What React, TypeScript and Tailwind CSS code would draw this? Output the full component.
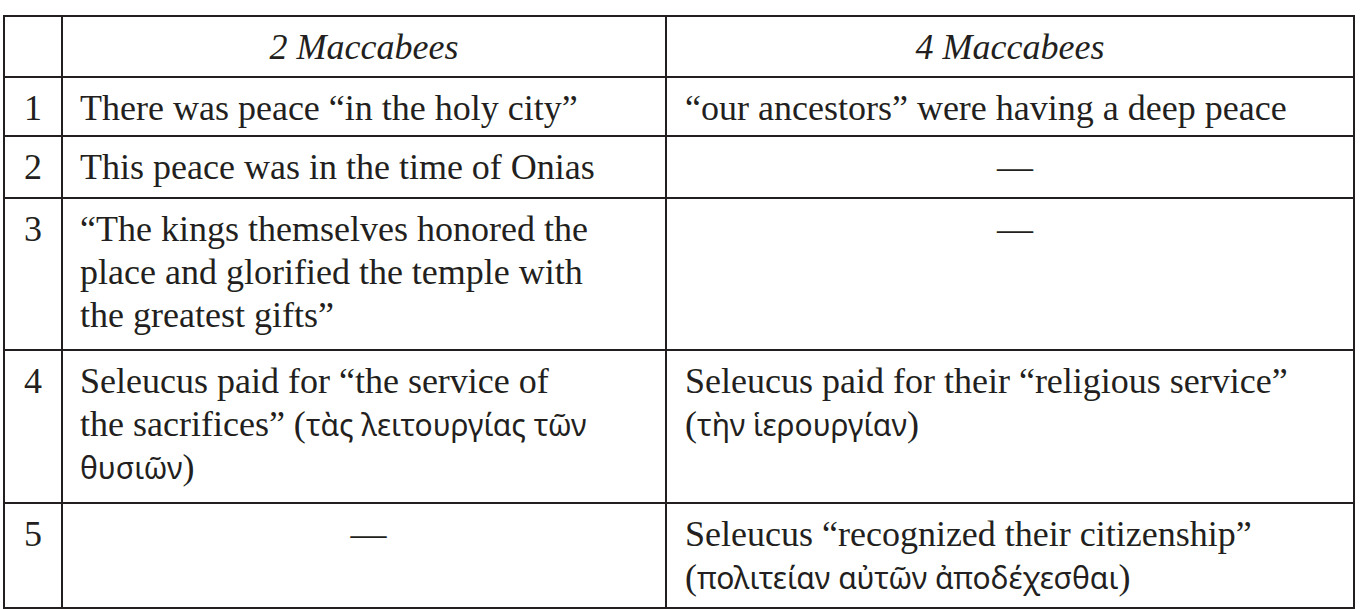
import type { ReactNode } from "react";

const INK = "text-[#231f20]";

function Greek({ children }: { children: ReactNode }) {
  return <span className="font-['Noto_Sans',sans-serif] text-[30px]">{children}</span>;
}

function Dash() {
  return <div className="text-center">—</div>;
}

type Row = { n: number; h: string; left: ReactNode; right: ReactNode };

const ROWS: Row[] = [
  {
    n: 1,
    h: "h-[59px]",
    left: <>There was peace “in the holy city”</>,
    right: <>“our ancestors” were having a deep peace</>,
  },
  {
    n: 2,
    h: "h-[62px]",
    left: <>This peace was in the time of Onias</>,
    right: <Dash />,
  },
  {
    n: 3,
    h: "h-[152px]",
    left: (
      <>
        “The kings themselves honored the
        <br />
        place and glorified the temple with
        <br />
        the greatest gifts”
      </>
    ),
    right: <Dash />,
  },
  {
    n: 4,
    h: "h-[153px]",
    left: (
      <>
        Seleucus paid for “the service of
        <br />
        the sacrifices” (<Greek>τὰς λειτουργίας τῶν</Greek>
        <br />
        <Greek>θυσιῶν</Greek>)
      </>
    ),
    right: (
      <>
        Seleucus paid for their “religious service”
        <br />
        (<Greek>τὴν ἱερουργίαν</Greek>)
      </>
    ),
  },
  {
    n: 5,
    h: "h-[105px]",
    left: <Dash />,
    right: (
      <>
        Seleucus “recognized their citizenship”
        <br />
        (<Greek>πολιτείαν αὐτῶν ἀποδέχεσθαι</Greek>)
      </>
    ),
  },
];

const cell = "border-2 border-[#231f20] align-top pt-[9px] pb-0";

export default function App() {
  return (
    <div className={`min-h-[609px] bg-white ${INK} font-['Liberation_Serif',serif] text-[36px] leading-[43px]`}>
      <div className="pt-[15px] pl-[3px]">
        <table className="w-[1350px] table-fixed border-collapse">
          <colgroup>
            <col className="w-[58px]" />
            <col className="w-[604px]" />
            <col className="w-[688px]" />
          </colgroup>
          <thead>
            <tr className="h-[61px]">
              <th className={`${cell} font-normal`} />
              <th className={`${cell} pt-[8px] text-center font-normal italic`}>2 Maccabees</th>
              <th className={`${cell} pt-[8px] text-center font-normal italic`}>4 Maccabees</th>
            </tr>
          </thead>
          <tbody>
            {ROWS.map((r) => (
              <tr key={r.n} className={r.h}>
                <td className={`${cell} text-center`}>{r.n}</td>
                <td className={`${cell} pl-[17px] pr-2`}>{r.left}</td>
                <td className={`${cell} pl-[18px] pr-2`}>{r.right}</td>
              </tr>
            ))}
          </tbody>
        </table>
      </div>
    </div>
  );
}
